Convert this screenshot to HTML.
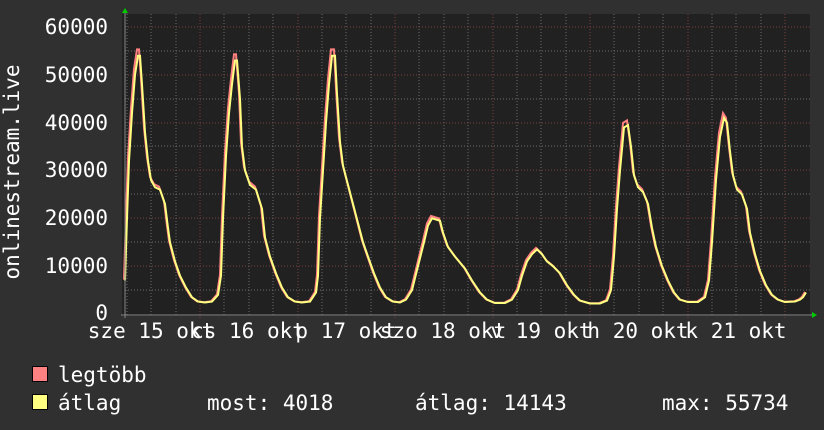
<!DOCTYPE html>
<html><head><meta charset="utf-8"><style>
html,body{margin:0;padding:0;background:#303030;width:824px;height:430px;overflow:hidden}
svg{display:block}
text{font-family:"DejaVu Sans Mono","Liberation Mono",monospace;fill:#fff;font-size:21px}
</style></head><body>
<svg width="824" height="430" viewBox="0 0 824 430" xmlns="http://www.w3.org/2000/svg">
<rect width="824" height="430" fill="#303030"/>
<rect x="122" y="14" width="688" height="302" fill="#212121"/>
<g stroke="#6a6a6a" stroke-width="1" stroke-dasharray="1,2">
<line x1="125" y1="290" x2="810" y2="290"/><line x1="125" y1="242" x2="810" y2="242"/><line x1="125" y1="194" x2="810" y2="194"/><line x1="125" y1="146" x2="810" y2="146"/><line x1="125" y1="99" x2="810" y2="99"/><line x1="125" y1="51" x2="810" y2="51"/>
<line x1="151" y1="14" x2="151" y2="316"/><line x1="176" y1="14" x2="176" y2="316"/><line x1="224" y1="14" x2="224" y2="316"/><line x1="249" y1="14" x2="249" y2="316"/><line x1="273" y1="14" x2="273" y2="316"/><line x1="322" y1="14" x2="322" y2="316"/><line x1="346" y1="14" x2="346" y2="316"/><line x1="371" y1="14" x2="371" y2="316"/><line x1="419" y1="14" x2="419" y2="316"/><line x1="444" y1="14" x2="444" y2="316"/><line x1="468" y1="14" x2="468" y2="316"/><line x1="517" y1="14" x2="517" y2="316"/><line x1="541" y1="14" x2="541" y2="316"/><line x1="566" y1="14" x2="566" y2="316"/><line x1="614" y1="14" x2="614" y2="316"/><line x1="639" y1="14" x2="639" y2="316"/><line x1="663" y1="14" x2="663" y2="316"/><line x1="712" y1="14" x2="712" y2="316"/><line x1="736" y1="14" x2="736" y2="316"/><line x1="761" y1="14" x2="761" y2="316"/><line x1="127" y1="14" x2="127" y2="316"/>
</g>
<g stroke="#7a4040" stroke-width="1" stroke-dasharray="1,2">
<line x1="125" y1="266" x2="810" y2="266"/><line x1="125" y1="218" x2="810" y2="218"/><line x1="125" y1="170" x2="810" y2="170"/><line x1="125" y1="123" x2="810" y2="123"/><line x1="125" y1="75" x2="810" y2="75"/><line x1="125" y1="27" x2="810" y2="27"/>
<line x1="200" y1="14" x2="200" y2="320"/><line x1="298" y1="14" x2="298" y2="320"/><line x1="395" y1="14" x2="395" y2="320"/><line x1="493" y1="14" x2="493" y2="320"/><line x1="590" y1="14" x2="590" y2="320"/><line x1="688" y1="14" x2="688" y2="320"/><line x1="785" y1="14" x2="785" y2="320"/>
</g>
<g transform="translate(-1,314) scale(1,-4.9)">
<polyline vector-effect="non-scaling-stroke" fill="none" stroke="#ff8080" stroke-width="2" points="125,7 127,20 129,32 132,42 135,50 138,54 140,54 142,48 145,38 148,32 151,28 155,26.5 160,26 165,23 168,18 170,15 175,11 180,8 186,5.5 192,3.5 198,2.6 205,2.4 212,2.6 218,4 221,8 223,20 226,33 229,42 232,48 235,53 237,53 240,45 242,35 245,30 250,27 256,26 262,22 265,16 270,12 276,8.5 282,5.5 288,3.5 295,2.6 302,2.4 310,2.6 316,4.5 318,8 320,20 323,30 326,40 329,48 332,54 335,54 337,46 340,36 343,31 348,27 353,23 358,19 363,15 368,12 374,8.5 380,5.5 386,3.5 393,2.6 400,2.4 406,3 412,5 418,10 424,15 428,18.5 432,20 440,19.5 443,17 448,14 455,12 465,9.5 472,7 480,4.5 487,3 495,2.3 505,2.3 512,3 518,5 522,8 527,11 532,12.5 537,13.5 542,12.5 547,11 553,10 560,8.5 567,6 574,4 580,2.8 590,2.2 600,2.2 607,2.8 611,5 614,12 617,22 620,30 624,39 628,39.5 631,35 634,29 638,26.5 643,25.5 648,23 652,18 656,14 662,10 668,7 674,4.5 680,3 688,2.5 698,2.5 705,3.5 709,7 712,15 716,28 720,37 724,41 727,40 730,34 733,29 737,26 742,25 747,22 750,17 755,12.5 760,9 766,6 772,4 778,3 785,2.5 795,2.6 800,3 803,3.5 806,4.5"/>
</g>
<g transform="translate(0,314) scale(1,-4.783)">
<polyline vector-effect="non-scaling-stroke" fill="none" stroke="#ffff80" stroke-width="2" points="125,7 127,20 129,32 132,42 135,50 138,54 140,54 142,48 145,38 148,32 151,28 155,26.5 160,26 165,23 168,18 170,15 175,11 180,8 186,5.5 192,3.5 198,2.6 205,2.4 212,2.6 218,4 221,8 223,20 226,33 229,42 232,48 235,53 237,53 240,45 242,35 245,30 250,27 256,26 262,22 265,16 270,12 276,8.5 282,5.5 288,3.5 295,2.6 302,2.4 310,2.6 316,4.5 318,8 320,20 323,30 326,40 329,48 332,54 335,54 337,46 340,36 343,31 348,27 353,23 358,19 363,15 368,12 374,8.5 380,5.5 386,3.5 393,2.6 400,2.4 406,3 412,5 418,10 424,15 428,18.5 432,20 440,19.5 443,17 448,14 455,12 465,9.5 472,7 480,4.5 487,3 495,2.3 505,2.3 512,3 518,5 522,8 527,11 532,12.5 537,13.5 542,12.5 547,11 553,10 560,8.5 567,6 574,4 580,2.8 590,2.2 600,2.2 607,2.8 611,5 614,12 617,22 620,30 624,39 628,39.5 631,35 634,29 638,26.5 643,25.5 648,23 652,18 656,14 662,10 668,7 674,4.5 680,3 688,2.5 698,2.5 705,3.5 709,7 712,15 716,28 720,37 724,41 727,40 730,34 733,29 737,26 742,25 747,22 750,17 755,12.5 760,9 766,6 772,4 778,3 785,2.5 795,2.6 800,3 803,3.5 806,4.5"/>
</g>
<line x1="125" y1="12" x2="125" y2="318" stroke="#888" stroke-width="1"/>
<line x1="121" y1="315" x2="813" y2="315" stroke="#888" stroke-width="1"/>
<polygon points="122,13 128,13 125,8" fill="#00cc00"/>
<polygon points="812,312 812,318 817,315" fill="#00cc00"/>
<g text-anchor="end">
<text x="108" y="34">60000</text><text x="108" y="82">50000</text><text x="108" y="130">40000</text><text x="108" y="177">30000</text><text x="108" y="225">20000</text><text x="108" y="273">10000</text><text x="108" y="320">0</text>
</g>
<text transform="translate(19,172) rotate(-90)" text-anchor="middle">onlinestream.live</text>
<g text-anchor="middle">
<text x="151" y="338">sze 15 okt</text><text x="248" y="338">cs 16 okt</text><text x="346" y="338">p 17 okt</text><text x="443" y="338">szo 18 okt</text><text x="541" y="338">v 19 okt</text><text x="638" y="338">h 20 okt</text><text x="736" y="338">k 21 okt</text>
</g>
<rect x="32.5" y="366.5" width="15" height="15" fill="#ff8080" stroke="#000"/>
<rect x="32.5" y="394.5" width="15" height="15" fill="#ffff80" stroke="#000"/>
<text x="58" y="382">legtöbb</text>
<text x="58" y="410">átlag</text>
<text x="207" y="410">most: 4018</text>
<text x="415" y="410">átlag: 14143</text>
<text x="662" y="410">max: 55734</text>
</svg>
</body></html>
